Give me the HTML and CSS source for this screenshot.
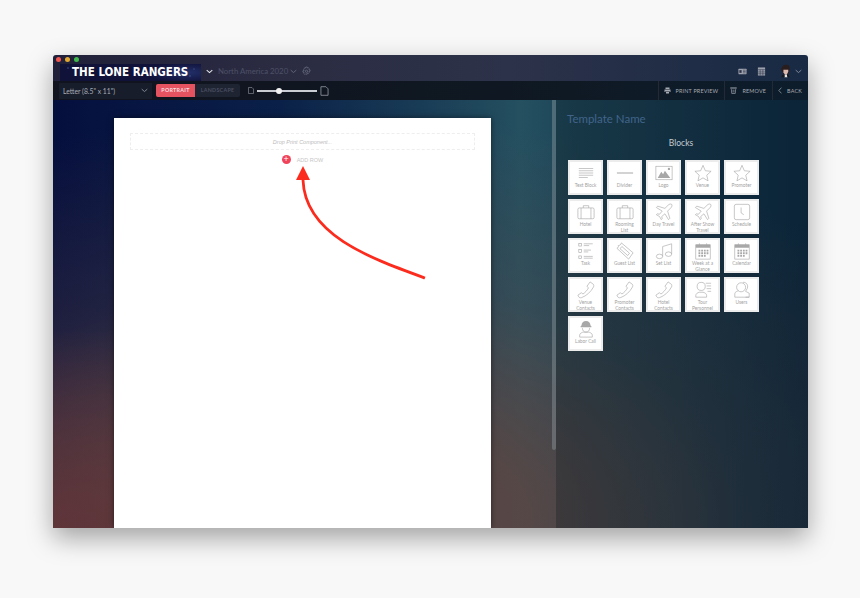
FILE: index.html
```html
<!DOCTYPE html>
<html lang="en">
<head>
    <meta charset="UTF-8">
    <meta name="viewport" content="width=device-width, initial-scale=1.0">
    <title>Print Template</title>
    <link rel="stylesheet" href="styles.css">
</head>
<body>
    <svg class="defs" width="0" height="0">
        <defs>
            <symbol id="i-star" viewBox="0 0 20 20"><path d="M10 1.500l2.600 6 6.400.6-4.800 4.300 1.400 6.300L10 15.400l-5.600 3.300 1.400-6.300L1 8.100l6.400-.6z"/></symbol>
            <symbol id="i-case" viewBox="0 0 20 20"><rect x="1" y="5.500" width="18" height="12" rx="1.500"/><path d="M7 5.500V3h6v2.500M4.500 5.500v12M15.500 5.500v12"/></symbol>
            <symbol id="i-plane" viewBox="0 0 20 20"><path d="M18.500 1.500c-1-1-3 0-4 1l-3.500 3.500-8-2.500-1.500 1.500 6.500 4-3 3.500-2.500-.5-1 1 3.500 2 2 3.500 1-1-.5-2.500 3.500-3 4 6.500 1.500-1.500-2.500-8 3.500-3.500c1-1 2-3 1-4z"/></symbol>
            <symbol id="i-cal" viewBox="0 0 20 20"><rect x="2" y="3" width="16" height="16"/><path class="fill" d="M2 3h16v3.500H2z"/><path class="fill" d="M5 8.500h2v2H5zM8 8.500h2v2H8zM11 8.500h2v2h-2zM14 8.500h2v2h-2zM5 11.500h2v2H5zM8 11.500h2v2H8zM11 11.500h2v2h-2zM14 11.500h2v2h-2zM5 14.500h2v2H5zM8 14.500h2v2H8zM11 14.500h2v2h-2z"/><path d="M6 1.500v2M14 1.500v2"/></symbol>
            <symbol id="i-phone" viewBox="0 0 20 20"><path d="M14.500 1l3.500 2.500c.8.600.8 2 .3 3.200C15.500 12 10.500 16.500 5 18.500c-1.300.4-2.500 0-3-.8l-1-2 4-2.700 1.500 1.500c2.500-1.500 5-4.300 6.300-7L11 6z"/></symbol>
        </defs>
    </svg>

    <div class="window">
        <header class="topbar">
            <div class="lights"><i class="red"></i><i class="yellow"></i><i class="green"></i></div>
            <div class="brand">THE LONE RANGERS</div>
            <svg class="chev white" viewBox="0 0 10 6"><path d="M1 1l4 3.500L9 1"/></svg>
            <span class="tour">North America 2020</span>
            <svg class="chev tour-chev" viewBox="0 0 10 6"><path d="M1 1l4 3.500L9 1"/></svg>
            <svg class="gear" viewBox="0 0 20 20"><path d="M8.500 1h3l.5 2.500 2-.8 2.200 2.100-.9 2.200 2.700.5v3l-2.700.5.900 2.200-2.200 2.100-2-.8-.5 2.500h-3L8 16.500l-2 .8-2.200-2.100.9-2.200L2 12.500v-3l2.700-.5-.9-2.200L6 2.700l2 .8z"/><circle cx="10" cy="10.500" r="2.500"/></svg>
            <div class="top-right">
                <svg class="top-icon" viewBox="0 0 20 14"><rect x="1" y="1" width="18" height="12" rx="1"/><rect class="cut" x="3" y="4" width="5" height="6"/><path class="cut-line" d="M11 4h6M11 7h6M11 10h6"/></svg>
                <svg class="top-icon cal" viewBox="0 0 18 20"><rect x="1" y="1" width="16" height="18"/><path class="cut-line" d="M1 6h16M1 11h16M1 15h16M6 6v13M12 6v13"/></svg>
                <svg class="avatar" viewBox="0 0 16 18"><path fill="#2a1d1e" d="M2 9C1 3 5 0 9 0s6 3 5 7l-1 3-1 4H4l1-3z"/><path fill="#d9b8ae" d="M5 7h7v3l-2 4H7l-2-3z"/><path fill="#e8e4e0" d="M7 14h3l1 4H6z"/><path fill="#14181f" d="M2 18l1-3 3-1 1 4zM14 18l-1-3-3-1 1 4z"/></svg>
                <svg class="chev" viewBox="0 0 10 6"><path d="M1 1l4 3.500L9 1"/></svg>
            </div>
        </header>

        <div class="toolbar">
            <div class="select"><span>Letter (8.5" x 11")</span><svg class="chev" viewBox="0 0 10 6"><path d="M1 1l4 3.500L9 1"/></svg></div>
            <div class="segment">
                <span class="seg on">PORTRAIT</span>
                <span class="seg">LANDSCAPE</span>
            </div>
            <svg class="page-ic small" viewBox="0 0 12 14"><path d="M1 1h7l3 3v9H1z"/></svg>
            <div class="slider"><i></i></div>
            <svg class="page-ic" viewBox="0 0 12 14"><path d="M1 1h7l3 3v9H1z"/></svg>
            <div class="actions">
                <div class="action">
                    <svg viewBox="0 0 14 12"><path class="solid" d="M3 0h8v3H3zM1 4h12v5h-2V7H3v2H1zM4 8h6v4H4z"/></svg>
                    PRINT PREVIEW
                </div>
                <div class="action">
                    <svg viewBox="0 0 12 13"><path class="solid" d="M0 1h12v2H0z"/><path class="line" d="M2 4l.7 8h6.600l.7-8M4 6h4M4 9h4"/></svg>
                    REMOVE
                </div>
                <div class="action back">
                    <svg viewBox="0 0 7 12"><path class="line" d="M6 1L1.500 6 6 11"/></svg>
                    BACK
                </div>
            </div>
        </div>

        <div class="workspace">
            <div class="canvas">
                <div class="paper">
                    <div class="drop">Drop Print Component...</div>
                    <div class="add-row"><span class="plus">+</span><span>ADD ROW</span></div>
                </div>
            </div>
            <div class="scrollbar"></div>
            <aside class="panel">
                <h2>Template Name</h2>
                <h3>Blocks</h3>
                <div class="blocks">
                    <div class="tile"><svg viewBox="0 0 20 20"><path d="M2 5h16M2 7.500h16M2 10h16M2 12.500h16M2 15h10"/></svg><span>Text Block</span></div>
                    <div class="tile"><svg viewBox="0 0 20 20"><path class="thick" d="M1 10h18"/></svg><span>Divider</span></div>
                    <div class="tile"><svg viewBox="0 0 20 20"><rect x="1" y="2.500" width="18" height="15"/><path class="fill" d="M3 15.500l4-7 2 3 2-4 6 8z"/><circle class="fill" cx="15.500" cy="5.500" r="1.300"/></svg><span>Logo</span></div>
                    <div class="tile"><svg><use href="#i-star"/></svg><span>Venue</span></div>
                    <div class="tile"><svg><use href="#i-star"/></svg><span>Promoter</span></div>

                    <div class="tile"><svg><use href="#i-case"/></svg><span>Hotel</span></div>
                    <div class="tile"><svg><use href="#i-case"/></svg><span>Rooming<br>List</span></div>
                    <div class="tile"><svg><use href="#i-plane"/></svg><span>Day Travel</span></div>
                    <div class="tile"><svg><use href="#i-plane"/></svg><span>After Show<br>Travel</span></div>
                    <div class="tile"><svg viewBox="0 0 20 20"><rect x="1.500" y="1.500" width="17" height="17" rx="2"/><path d="M9 5v6l3 2"/></svg><span>Schedule</span></div>

                    <div class="tile"><svg viewBox="0 0 20 20"><rect x="2" y="1.500" width="3" height="3"/><rect x="2" y="8.500" width="3" height="3"/><rect x="2" y="15.500" width="3" height="3"/><path d="M7.500 2h10M7.500 4h6M7.500 9h8M7.500 11h5M7.500 16h10M7.500 18h10"/></svg><span>Task</span></div>
                    <div class="tile"><svg viewBox="0 0 20 20"><path d="M6 1l13 11-5 7L1 7c1.500-.5 2-2 1.500-3C4 4 5.500 3 6 1z"/><path d="M6.500 5l8.500 7.500-2 2.500L4.500 7.500z"/></svg><span>Guest List</span></div>
                    <div class="tile"><svg viewBox="0 0 20 20"><ellipse cx="5" cy="16" rx="3.500" ry="2.500"/><ellipse cx="15" cy="13.500" rx="3.500" ry="2.500"/><path d="M8.500 16V5L18.500 2v11.500"/></svg><span>Set List</span></div>
                    <div class="tile"><svg><use href="#i-cal"/></svg><span>Week at a<br>Glance</span></div>
                    <div class="tile"><svg><use href="#i-cal"/></svg><span>Calendar</span></div>

                    <div class="tile"><svg><use href="#i-phone"/></svg><span>Venue<br>Contacts</span></div>
                    <div class="tile"><svg><use href="#i-phone"/></svg><span>Promoter<br>Contacts</span></div>
                    <div class="tile"><svg><use href="#i-phone"/></svg><span>Hotel<br>Contacts</span></div>
                    <div class="tile"><svg viewBox="0 0 20 20"><circle cx="8" cy="6" r="4.500"/><path d="M2 18v-2c0-2 2-3 4-3.500h4c2 .5 4 1.500 4 3.500v2zM13 2.500h6M14 5.500h5M14 8.500h5M15 11.500h4"/></svg><span>Tour<br>Personnel</span></div>
                    <div class="tile"><svg viewBox="0 0 20 20"><circle cx="9" cy="7" r="5"/><path d="M11 1.500c4-.5 6 3 5 6.500l-2 3.500 4 2v4.500H2v-4c0-2 3-2.500 4-3.500M14 18h4"/></svg><span>Users</span></div>

                    <div class="tile"><svg viewBox="0 0 20 20"><path class="fill" d="M5 6c0-3 2-5 5-5s5 2 5 5l1 1v1H4V7z"/><path d="M6 9c0 3 2 4.500 4 4.500s4-1.500 4-4.500M3 19v-2.500c0-1.500 3-3 4-3h6c1 0 4 1.500 4 3V19z"/></svg><span>Labor Call</span></div>
                </div>
            </aside>

            <svg class="arrow" viewBox="0 0 160 120">
                <path class="arrow-line" d="M138 116C83 96 18 73 16 18"/>
                <path class="arrow-head" d="M16 4l7 14H9z"/>
            </svg>
        </div>
    </div>
</body>
</html>
```

FILE: styles.css
```css
html, body {
    height: 100%;
}
body {
    margin: 0;
    padding: 55px 52px 0 53px;
    box-sizing: border-box;
    overflow: hidden;
    background-color: #f8f8f8;
    font-family: Lato, "Open Sans", sans-serif;
}
.defs {
    position: absolute;
}
.window {
    height: 473px;
    display: flex;
    flex-direction: column;
    border-radius: 3px 3px 0 0;
    overflow: hidden;
    box-shadow: 0 10px 26px rgba(0,0,0,0.35);
}

/* top bar */
.topbar {
    position: relative;
    height: 26px;
    display: flex;
    align-items: center;
    background: linear-gradient(90deg, #20203a 0%, #2b2c42 30%, #2c3249 60%, #182a44 100%);
}
.lights {
    position: absolute;
    top: 2px;
    left: 3px;
    display: flex;
    gap: 4px;
}
.lights i {
    width: 5px;
    height: 5px;
    border-radius: 50%;
}
.red { background-color: #f0564e; }
.yellow { background-color: #e2a72e; }
.green { background-color: #3fb94a; }
.brand {
    margin: 8px 0 0 7px;
    width: 141px;
    height: 17px;
    line-height: 17px;
    padding-left: 12px;
    box-sizing: border-box;
    background:
        radial-gradient(1px 1px at 8px 4px, #5a6aa8, transparent),
        radial-gradient(1px 1px at 130px 12px, #5a6aa8, transparent),
        radial-gradient(1px 1px at 134px 5px, #4a5a98, transparent),
        radial-gradient(40px 10px at 90% 50%, #23306a, transparent),
        #10123a;
    color: #fff;
    font-family: "DejaVu Sans", sans-serif;
    font-stretch: condensed;
    font-size: 11.500px;
    font-weight: bold;
    white-space: nowrap;
}
.chev {
    width: 7px;
    height: 5px;
    fill: none;
    stroke: #8f96a6;
    stroke-width: 1.200;
    flex: none;
}
.chev.white {
    margin: 6px 0 0 5px;
    stroke: #e4e6ea;
    stroke-width: 1.500;
}
.tour {
    margin: 6px 2px 0 5px;
    font-size: 7.800px;
    color: #4d5167;
    white-space: nowrap;
}
.tour-chev {
    margin-top: 6px;
    stroke: #6a6f82;
}
.gear {
    width: 9px;
    height: 10px;
    margin: 6px 0 0 5px;
    fill: none;
    stroke: #7b7f90;
    stroke-width: 1.300;
}
.top-right {
    margin-left: auto;
    display: flex;
    align-items: center;
    padding: 6px 6px 0 0;
}
.top-icon {
    width: 9px;
    height: 7px;
    margin-right: 10px;
    fill: #9ea2ae;
}
.top-icon.cal {
    width: 9px;
    height: 9px;
    margin-right: 14px;
}
.cut {
    fill: #2a3046;
}
.cut-line {
    fill: none;
    stroke: #2a3046;
    stroke-width: 1.200;
}
.avatar {
    width: 11px;
    height: 14px;
    margin-right: 4px;
}

/* toolbar */
.toolbar {
    height: 19px;
    display: flex;
    align-items: center;
    background: linear-gradient(90deg, #11131e, #0f1822 60%, #0d1d2c);
    box-sizing: border-box;
}
.select {
    width: 93px;
    height: 16px;
    margin-left: 6px;
    padding: 0 4px;
    box-sizing: border-box;
    display: flex;
    align-items: center;
    justify-content: space-between;
    background-color: #181d2b;
    font-size: 6.800px;
    color: #a9adb8;
}
.segment {
    display: flex;
    margin-left: 4px;
    height: 13px;
    width: 84px;
    border-radius: 2px;
    overflow: hidden;
    background-color: #1f2433;
}
.seg {
    flex: 1;
    text-align: center;
    line-height: 13px;
    font-size: 5.300px;
    font-weight: bold;
    letter-spacing: 0.3px;
    color: #4a4f60;
}
.seg.on {
    flex: none;
    width: 39px;
    background-color: #e4535f;
    color: #f6dfe0;
}
.page-ic {
    width: 9px;
    height: 10px;
    margin-left: 3px;
    fill: none;
    stroke: #a8acb4;
    stroke-width: 1;
}
.page-ic.small {
    width: 6px;
    height: 7px;
    margin-left: 8px;
}
.slider {
    position: relative;
    width: 60px;
    height: 2px;
    margin-left: 3px;
    background-color: #c9ccd2;
}
.slider i {
    position: absolute;
    left: 19px;
    top: -2px;
    width: 6px;
    height: 6px;
    border-radius: 50%;
    background-color: #f2f2f2;
}
.actions {
    margin-left: auto;
    height: 100%;
    display: flex;
}
.action {
    display: flex;
    align-items: center;
    gap: 5px;
    padding: 0 6px 0 5px;
    border-left: 1px solid #232a35;
    font-size: 5.400px;
    letter-spacing: 0.2px;
    color: #a6abb4;
    white-space: nowrap;
}
.action svg {
    width: 7px;
    height: 7px;
}
.action.back svg {
    width: 4px;
}
.action .solid {
    fill: #a6abb4;
}
.action .line {
    fill: none;
    stroke: #a6abb4;
    stroke-width: 1.200;
}

/* workspace */
.workspace {
    position: relative;
    flex: 1;
    display: flex;
    min-height: 0;
    background:
        radial-gradient(300px 200px at 0% 100%, rgba(98,52,56,0.9), rgba(98,52,56,0) 100%),
        radial-gradient(700px 420px at 35% 100%, rgba(94,70,66,1) 0%, rgba(94,70,66,0.85) 30%, rgba(94,70,66,0.3) 60%, rgba(94,70,66,0) 100%),
        linear-gradient(90deg, #050f3e 0%, #0a2048 30%, #245060 62%, #1c4458 70%, #0c2a44 100%);
}
.canvas {
    width: 499px;
    padding: 18px 0 0 61px;
    box-sizing: border-box;
}
.paper {
    width: 377px;
    height: 100%;
    padding-top: 15px;
    box-sizing: border-box;
    background-color: #fff;
    box-shadow: 0 0 6px rgba(0,0,0,0.5);
}
.drop {
    height: 17px;
    margin: 0 16px;
    line-height: 16px;
    border: 1px dashed #eee;
    box-sizing: border-box;
    text-align: center;
    font-family: "Liberation Sans", sans-serif;
    font-size: 5.500px;
    font-style: italic;
    color: #bcbcbc;
}
.add-row {
    display: flex;
    align-items: center;
    justify-content: center;
    gap: 6px;
    margin-top: 5px;
    font-family: "Liberation Sans", sans-serif;
    font-size: 5.500px;
    color: #c6c6c6;
}
.plus {
    width: 9px;
    height: 9px;
    line-height: 9px;
    border-radius: 50%;
    background-color: #f0435a;
    color: #fff;
    text-align: center;
    font-size: 9px;
}
.scrollbar {
    width: 4px;
    height: 350px;
    border-radius: 0 0 2px 2px;
    background-color: rgba(150,160,165,0.4);
}
.panel {
    flex: 1;
    padding: 12px 0 0 11px;
    min-width: 0;
    background-color: rgba(12,20,26,0.28);
}
.panel h2 {
    margin: 0;
    font-size: 11.500px;
    font-weight: normal;
    line-height: 14px;
    color: #41648a;
}
.panel h3 {
    width: 228px;
    margin: 12px 0 0;
    text-align: center;
    font-size: 8.500px;
    font-weight: normal;
    line-height: 11px;
    color: #c3cbd2;
}
.blocks {
    display: grid;
    grid-template-columns: repeat(5, 35px);
    grid-auto-rows: 35px;
    gap: 4px;
    margin: 11px 0 0 1px;
}
.tile {
    display: flex;
    flex-direction: column;
    align-items: center;
    padding-top: 2px;
    box-sizing: border-box;
    background-color: #fff;
    border: 2px solid #ececec;
    overflow: hidden;
}
.tile svg {
    width: 18px;
    height: 18px;
    flex: none;
    fill: none;
    stroke: #a8a8a8;
    stroke-width: 0.700;
}
.tile .thick {
    stroke-width: 1.200;
}
.tile .fill, symbol .fill {
    fill: #a8a8a8;
    stroke: none;
}
.tile span {
    font-size: 4.800px;
    line-height: 6px;
    text-align: center;
    color: #a2a2a2;
    white-space: nowrap;
}

/* annotation arrow over the paper */
.arrow {
    position: absolute;
    left: 234px;
    top: 62px;
    width: 160px;
    height: 120px;
}
.arrow-line {
    fill: none;
    stroke: #fb2c1e;
    stroke-width: 2.800;
}
.arrow-head {
    fill: #fb2c1e;
}
```
